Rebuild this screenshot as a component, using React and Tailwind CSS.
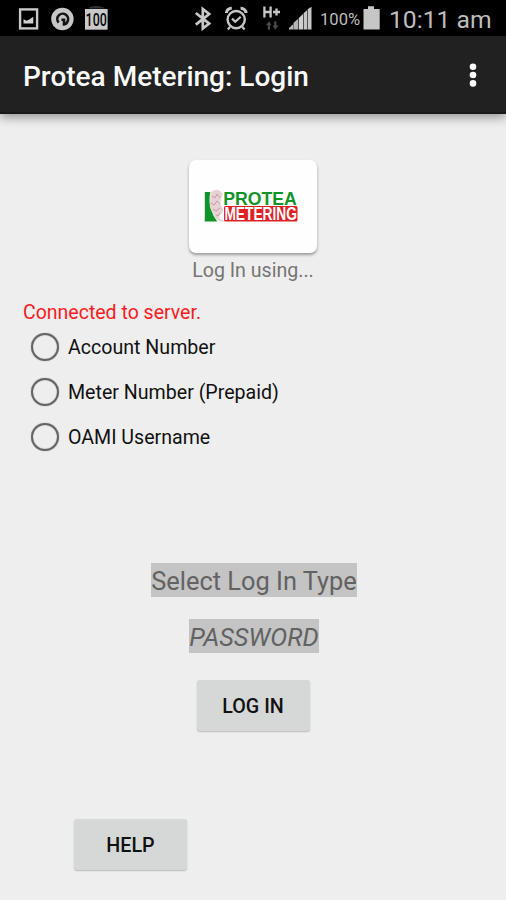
const options = ["Account Number", "Meter Number (Prepaid)", "OAMI Username"];

function LeftIcons() {
  return (
    <svg width="92" height="24" viewBox="18 7 92 24" fill="none" overflow="visible">
      <rect x="20.1" y="9.4" width="17" height="19" stroke="#c9c9c9" strokeWidth="2.4" />
      <path d="M23.5 23.5v-4.3l3 1.6 2.4-1 4.4-3v6.7z" fill="#d0d0d0" />
      <circle cx="62.4" cy="19" r="11.2" fill="#c6c6c6" />
      <path d="M58.6 22.6a5.4 5.4 0 1 1 8.8-.8q-1 2.4-3.4 2.6v-4.6h-2.6" stroke="#141414" strokeWidth="2.6" />
      <path d="M89 8.5q0-2.5 7-2.5t9 2.5z" fill="#333" />
      <rect x="85" y="9" width="22.6" height="20.7" fill="#c9c9c9" />
      <text x="85.6" y="26" textLength="21.2" lengthAdjust="spacingAndGlyphs" fontFamily="Roboto, sans-serif" fontSize="18" fontWeight="500" fill="#080808">100</text>
    </svg>
  );
}

function RightIcons() {
  return (
    <svg width="120" height="28" viewBox="193 3 120 28" fill="none" overflow="visible">
      <path d="M195.8 13l13.4 10.6-6.4 5V9l6.4 5-13.4 10.6" stroke="#c8c8c8" strokeWidth="2.7" />
      <circle cx="236.2" cy="19.6" r="8.6" stroke="#c6c6c6" strokeWidth="2.4" />
      <path d="M232 18.6l3.3 3.2 5.4-5M230 27l-2.2 2.4M242.4 27l2.2 2.4" stroke="#c6c6c6" strokeWidth="2.2" />
      <path d="M226.4 13c0-3 2.4-4.8 5.4-4.7M240.6 8.3c3-.1 5.4 1.8 5.4 4.7" stroke="#c6c6c6" strokeWidth="3" />
      <path d="M264.4 6.5v11M270.6 6.5v11M264.2 12h6.6M273 12h7M276.5 8.5v7" stroke="#c6c6c6" strokeWidth="2.3" />
      <path d="M265.8 25.3l3.6-4 2 4h-1.4v4.5h-2.2v-4.5zM278.6 25.5l-3.4 4.2-2.6-4.2h1.6v-4.2h2.2v4.2z" fill="#4a4a4a" />
      <path d="M289 29.5v-1.5l4.4-4v5.5z" fill="#b8b8b8" />
      <path d="M293.6 29.5v-6.7l4.6-4v10.7z" fill="#b4b4b4" />
      <path d="M298.8 29.5V18l4.2-4v15.5z" fill="#d0d0d0" />
      <path d="M303.6 29.5V13.2l3.4-3v19.3z" fill="#c6c6c6" />
      <path d="M307.6 29.5V9.2l3.9-2.5v22.8z" fill="#c6c6c6" />
    </svg>
  );
}

function Logo() {
  return (
    <svg width="94" height="34" viewBox="206 190 94 34" overflow="visible">
      <path d="M204.8 192h5.5q-2 10 1 18 2 7 6 11.5h-12.5z" fill="#119327" />
      <path d="M211 192q4-3 7-2t4 3-1 6 1 8-1 7 1 6-3 1q-5-3-6-8-4-5-3-10 0-6 1-11z" fill="#e8d2d4" />
      <path d="M212 196l3 2 2-4 3 4M211 203l3 2 3-4 3 3M213 209l3 2 4-3M216 215l2 1 2-3" fill="none" stroke="#bb8f94" strokeWidth=".8" />
      <text x="223.2" y="204.6" textLength="73.6" lengthAdjust="spacingAndGlyphs" fontFamily="'Liberation Sans', sans-serif" fontWeight="700" fontSize="18" fill="#119327">PROTEA</text>
      <rect x="224" y="206" width="73.5" height="15.6" rx="1.5" fill="#dd2025" />
      <text x="224.4" y="219.9" textLength="72.6" lengthAdjust="spacingAndGlyphs" fontFamily="'Liberation Sans', sans-serif" fontWeight="700" fontSize="17.5" fill="#fff">METERING</text>
    </svg>
  );
}

export default function App() {
  return (
    <div className="flex h-[900px] w-[506px] flex-col overflow-hidden bg-[#eeeeee] font-[Roboto,sans-serif]">
      <div className="flex h-9 shrink-0 bg-black pl-[18px] pt-[3px] text-[#bdbdbd]">
        <div className="w-[175px] pt-1"><LeftIcons /></div>
        <RightIcons />
        <span className="ml-[7px] w-[43px] pt-[5px] text-[16.6px] leading-[24px] whitespace-nowrap">100%</span>
        <svg width="18" height="28" viewBox="363 3 18 28"><path d="M363.5 9h4.5V6.3h6V9h5.7v20.5h-16.2z" fill="#c6c6c6" /></svg>
        <span className="ml-[8px] pt-[1px] text-[24.7px] leading-[32px] whitespace-nowrap">10:11 am</span>
      </div>
      <header className="z-10 flex h-[78px] shrink-0 items-center justify-between border-b-2 border-[#191919] bg-[#212121] pl-[23px] pr-[29px] shadow-[0_3px_10px_rgba(0,0,0,0.4)]">
        <h1 className="pt-1.5 text-[28px] leading-8 font-medium whitespace-nowrap text-[#fafafa]">Protea Metering: Login</h1>
        <svg width="8" height="28" viewBox="0 0 8 28" fill="#fff"><circle cx="4" cy="6.7" r="3.3" /><circle cx="4" cy="15" r="3.3" /><circle cx="4" cy="23.4" r="3.3" /></svg>
      </header>
      <main className="flex flex-1 flex-col items-center pt-[46px]">
        <div className="flex h-[93px] w-[128px] items-center justify-center rounded-[7px] bg-[#fefefe] shadow-[0_2px_3px_rgba(0,0,0,0.35)]"><Logo /></div>
        <p className="mt-1.5 text-[19.6px] leading-6 whitespace-nowrap text-[#757575]">Log In using...</p>
        <div className="mt-[18px] w-full pl-[23px]">
          <p className="text-[19.5px] leading-6 whitespace-nowrap text-[#f91b22]">Connected to server.</p>
          <div className="-mt-px flex flex-col">
            {options.map((label) => (
              <label key={label} className="flex h-[45px] items-center pl-2">
                <span className="size-7 rounded-full border-2 border-[#646464] shadow-[0_0_1px_#666,inset_0_0_1px_#666]" />
                <span className="ml-[9px] pt-[3px] text-[19.6px] leading-6 whitespace-nowrap text-[#111]">{label}</span>
              </label>
            ))}
          </div>
        </div>
        <div className="mt-[104px] ml-[151px] flex h-[34px] w-[206px] items-center justify-center self-start bg-[#c4c4c4] pt-px text-[25.4px] leading-8 whitespace-nowrap text-[#626262]">Select Log In Type</div>
        <div className="mt-[22px] ml-[189px] flex h-[34px] w-[130px] items-center justify-center self-start bg-[#c4c4c4] pt-px text-[25.4px] leading-8 whitespace-nowrap text-[#626262] italic">PASSWORD</div>
        <button className="mt-[27px] flex h-[51px] w-[113px] items-center justify-center rounded-[3px] bg-[#d6d8d7] pt-0.5 text-[19.7px] font-medium whitespace-nowrap text-[#111] shadow-[0_1px_1.5px_rgba(0,0,0,0.22)]">LOG IN</button>
        <button className="mt-[88px] ml-[74px] flex h-[51px] w-[113px] items-center justify-center self-start rounded-[3px] bg-[#d6d8d7] pt-0.5 text-[19.7px] font-medium whitespace-nowrap text-[#111] shadow-[0_1px_1.5px_rgba(0,0,0,0.22)]">HELP</button>
      </main>
    </div>
  );
}
